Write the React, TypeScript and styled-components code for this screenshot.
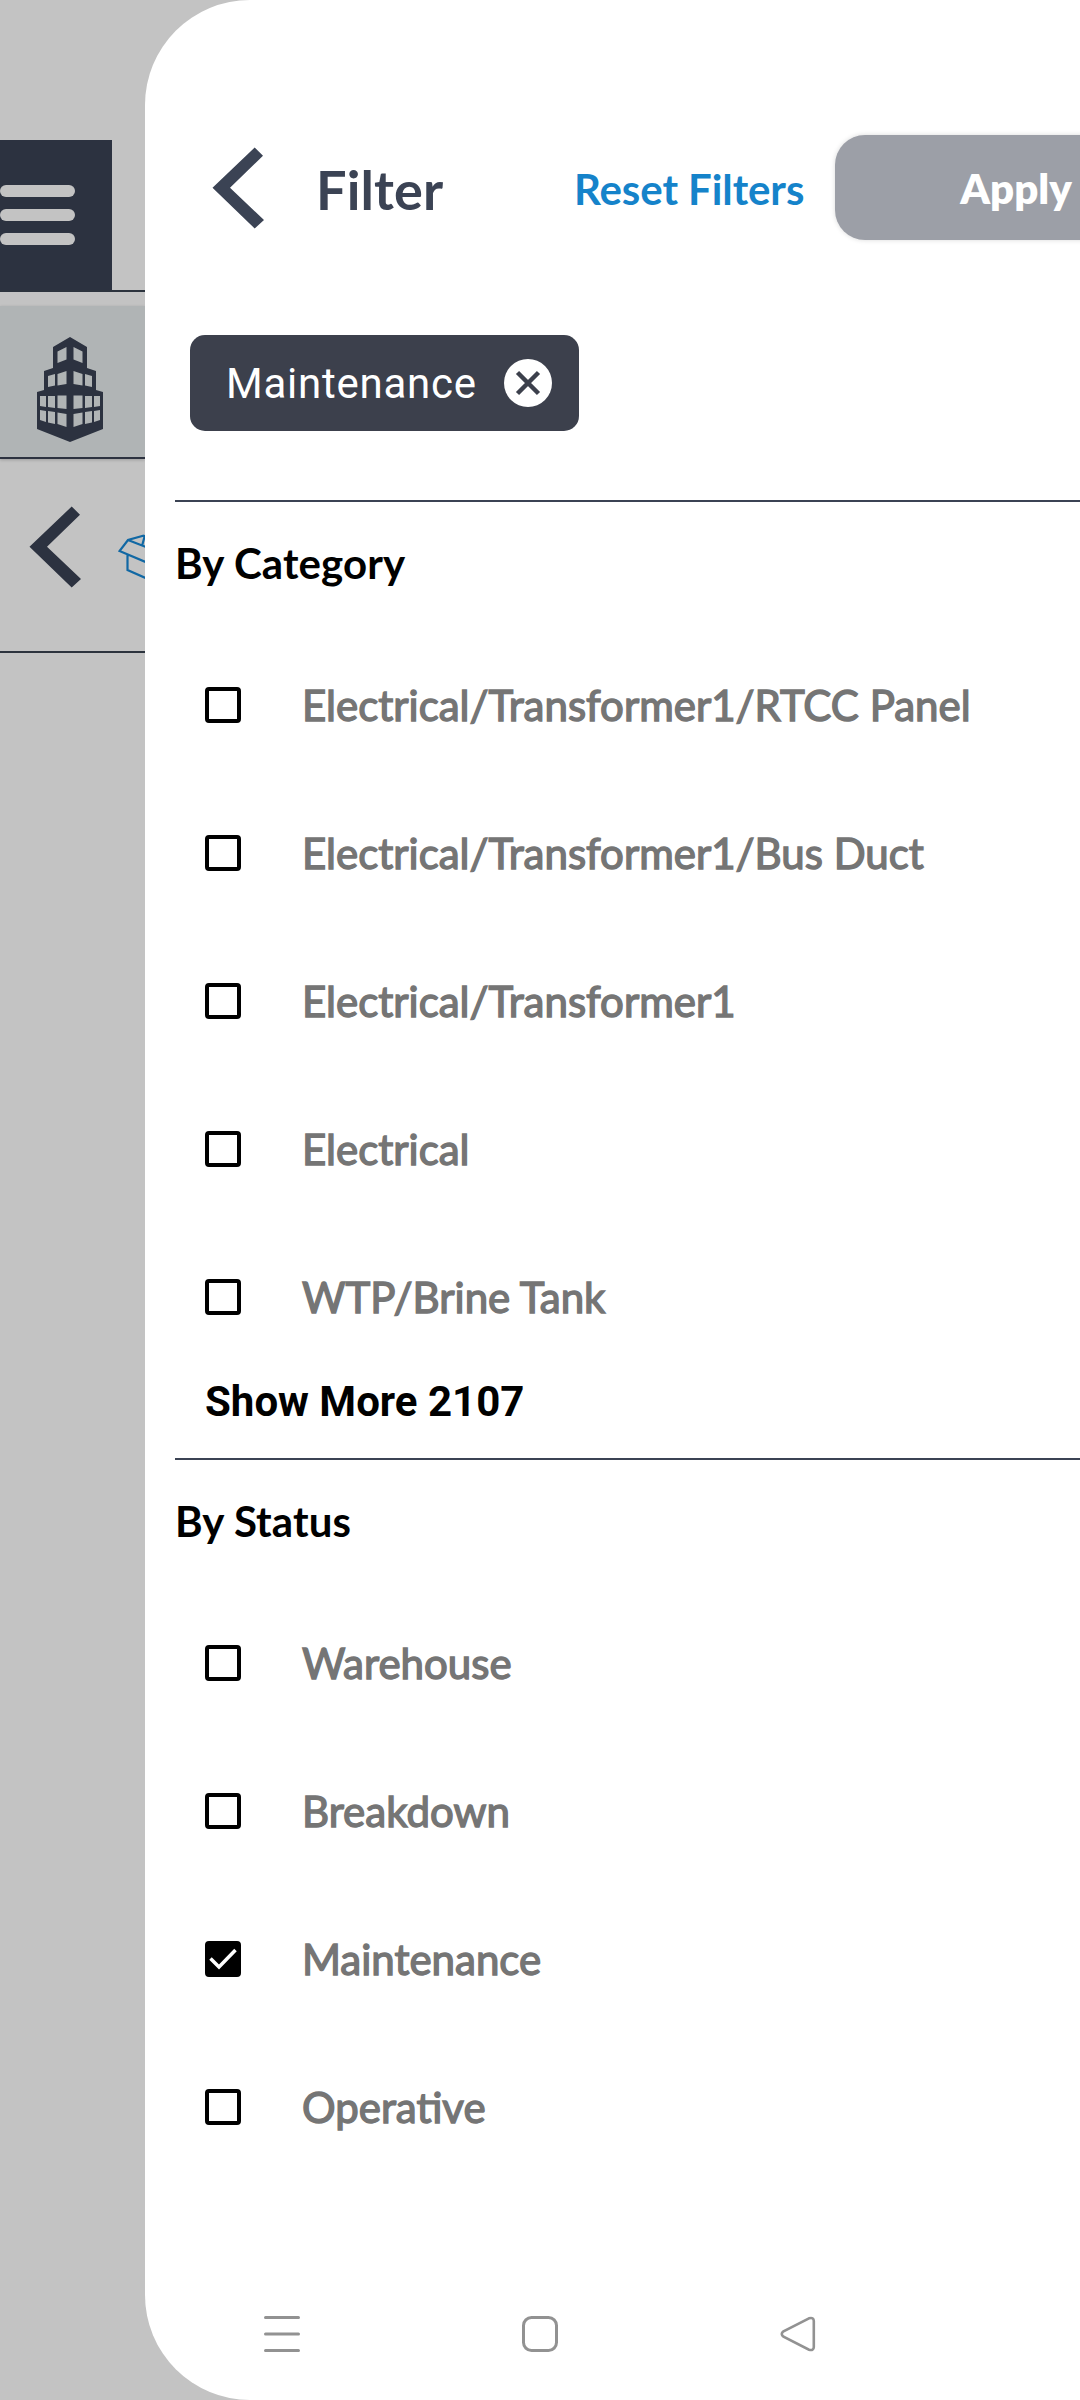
import React, { useState } from 'react';
import styled, { createGlobalStyle, css } from 'styled-components';

const navy = '#3b4354';
const dimNavy = '#2c3240';

const GlobalStyle = createGlobalStyle`
  *, *::before, *::after { box-sizing: border-box; }
  body { margin: 0; background: #c3c3c3; overflow: hidden; }
  button { border: 0; padding: 0; background: none; text-align: left; }
`;

const Screen = styled.div`
  display: flex;
  width: 1080px;
  height: 2400px;
  overflow: hidden;
  background: #c3c3c3;
  font-family: Lato, 'Open Sans', sans-serif;
`;

/* ---- dimmed page behind the drawer ---- */

const Backdrop = styled.aside`
  display: flex;
  flex-direction: column;
  flex: 0 0 145px;
  padding-top: 140px;
  overflow: hidden;
`;

const AppBar = styled.div`
  height: 152px;
  border-bottom: 2px solid #2c333d;
`;

const MenuTile = styled.div`
  display: flex;
  flex-direction: column;
  width: 112px;
  height: 150px;
  padding-top: 45px;
  gap: 12px;
  background: ${dimNavy};
`;

const MenuLine = styled.span`
  width: 75px;
  height: 12px;
  border-radius: 6px;
  background: #c3c3c3;
`;

const SiteBar = styled.div`
  height: 153px;
  margin-top: 14px;
  padding: 31px 0 0 37px;
  background: #b0b4b5;
  border-bottom: 2px solid ${dimNavy};
  box-shadow: 0 1px 3px rgba(0, 0, 0, 0.2);
`;

const TitleBar = styled.div`
  display: flex;
  align-items: flex-start;
  height: 194px;
  padding: 47px 0 0 29px;
  border-bottom: 2px solid #2c333d;
`;

const BoxSlot = styled.span`
  flex: none;
  margin: 28px 0 0 36px;
`;

/* ---- drawer ---- */

const Drawer = styled.main`
  display: flex;
  flex-direction: column;
  flex: 0 0 935px;
  height: 2400px;
  overflow: hidden;
  background: #fff;
  border-radius: 105px 0 0 105px;
`;

const Header = styled.header`
  display: flex;
  align-items: center;
  height: 105px;
  margin: 135px 0 0 67px;
`;

const Title = styled.h1`
  flex: none;
  width: 258px;
  margin: 4px 0 0 51px;
  color: ${navy};
  font-size: 54px;
  font-weight: 700;
  line-height: 64px;
  letter-spacing: 0.15px;
  white-space: nowrap;
`;

const ResetButton = styled.button`
  flex: none;
  width: 261px;
  margin-top: 3px;
  color: #1583ca;
  font: 700 42px/52px Lato, sans-serif;
  letter-spacing: -0.08px;
  white-space: nowrap;
`;

const ApplyButton = styled.button`
  flex: none;
  width: 362px;
  height: 105px;
  padding-top: 2px;
  border-radius: 30px;
  background: #9c9fa7;
  box-shadow: 0 0 5px rgba(0, 0, 0, 0.15);
  color: #fff;
  font: 800 42px/103px Lato, sans-serif;
  text-align: center;
`;

const Chips = styled.div`
  display: flex;
  height: 260px;
  padding: 95px 0 0 45px;
`;

const Chip = styled.div`
  display: flex;
  align-items: center;
  justify-content: space-between;
  width: 389px;
  height: 96px;
  padding: 0 27px 0 36px;
  border-radius: 15px;
  background: #3c404c;
  color: #fff;
  font-family: Roboto, sans-serif;
  font-size: 42px;
  letter-spacing: 0.75px;
`;

const Section = styled.section`
  display: flex;
  flex-direction: column;
  margin-left: 30px;
  border-top: 2px solid ${navy};
`;

const SectionTitle = styled.h2`
  height: 129px;
  margin: 0;
  padding-top: 35px;
  color: #000;
  font-size: 42px;
  font-weight: 700;
  line-height: 52px;
  letter-spacing: 0.12px;
  font-variant-ligatures: common-ligatures;
`;

const Option = styled.label`
  display: flex;
  align-items: center;
  gap: 60px;
  height: 148px;
  padding-left: 30px;
`;

const Tick = styled.span<{ $on: boolean }>`
  display: flex;
  flex: none;
  width: 36px;
  height: 36px;
  border: 4px solid #000;
  border-radius: 4px;
  ${(p) => p.$on && css`background: #000;`}
`;

const OptionText = styled.span`
  margin: 1px 0 0 1px;
  color: #757575;
  font-size: 42px;
  line-height: 51px;
  white-space: nowrap;
  -webkit-text-stroke: 1.4px #757575;
`;

const ShowMore = styled.button`
  display: flex;
  height: 87px;
  padding: 6px 0 0 30px;
  color: #000;
  font: 700 42px/50px Roboto, sans-serif;
`;

const NavBar = styled.nav`
  display: flex;
  gap: 222px;
  margin: auto 0 48px 119px;
`;

const ChevronSvg = styled.svg`
  flex: none;
`;

const Chevron = ({ color }: { color: string }) => (
  <ChevronSvg width="53" height="82" viewBox="0 0 53 82">
    <path d="M0.5 40.8 42.7 0.5 51 8.7 18 40.8 52 73 42.7 81.5Z" fill={color} />
  </ChevronSvg>
);

const Building = () => (
  <svg width="66" height="105" viewBox="0 0 66 105">
    <path
      fill={dimNavy}
      d="M33 0 50 10V31L59 34V53L66 55V92L33 105 0 92V55L7 53V34L16 31V10Z"
    />
    <path
      fill="#b0b4b5"
      d="M20.500 14.500 29.500 10V22.500L20.500 26ZM45.500 14.500 36.500 10V22.500L45.500 26Z
      M11 39 18 37V48.500L11 50ZM20.500 37 29.500 34V47L20.500 48.500ZM55 39 48 37V48.500L55 50ZM45.500 37 36.500 34V47L45.500 48.500Z
      M3 59H9V70L3 69ZM11 59H18V71L11 70ZM20.500 58.500H29.500V72L20.500 71ZM63 59H57V70L63 69ZM55 59H48V71L55 70ZM45.500 58.500H36.500V72L45.500 71Z
      M3 73 9 74V85L3 83ZM11 74 18 75V87L11 85.500ZM20.500 75.500 29.500 77V90L20.500 87ZM63 73 57 74V85L63 83ZM55 74 48 75V87L55 85.500ZM45.500 75.500 36.500 77V90L45.500 87Z"
    />
  </svg>
);

const OpenBox = () => (
  <svg width="54" height="50" viewBox="0 0 54 50" fill="none" stroke="#1168a4" strokeWidth="2.200">
    <path d="M26 1.500 10 6 1.500 17 30 29 38 17 10 6M24 12 27 1M9.500 20V36L30 45V29" />
  </svg>
);

const RemoveIcon = () => (
  <svg width="48" height="48" viewBox="0 0 48 48">
    <circle cx="24" cy="24" r="24" fill="#fff" />
    <path d="M13.500 13.500 34.500 34.500M34.500 13.500 13.500 34.500" stroke="#3c404c" strokeWidth="4.500" />
  </svg>
);

const CheckMark = () => (
  <svg width="28" height="28" viewBox="0 0 28 28" fill="none">
    <path d="M1.500 13.500 10 22 26.500 5" stroke="#fff" strokeWidth="3.500" />
  </svg>
);

const categories = [
  'Electrical/Transformer1/RTCC Panel',
  'Electrical/Transformer1/Bus Duct',
  'Electrical/Transformer1',
  'Electrical',
  'WTP/Brine Tank',
];
const statuses = ['Warehouse', 'Breakdown', 'Maintenance', 'Operative'];

export default function App() {
  const [selected, setSelected] = useState<string[]>(['Maintenance']);
  const toggle = (name: string) =>
    setSelected((s) => (s.includes(name) ? s.filter((n) => n !== name) : [...s, name]));

  const renderOption = (name: string) => (
    <Option key={name} onClick={() => toggle(name)}>
      <Tick $on={selected.includes(name)}>{selected.includes(name) && <CheckMark />}</Tick>
      <OptionText>{name}</OptionText>
    </Option>
  );

  return (
    <>
      <GlobalStyle />
      <Screen>
        <Backdrop>
          <AppBar>
            <MenuTile>
              <MenuLine />
              <MenuLine />
              <MenuLine />
            </MenuTile>
          </AppBar>
          <SiteBar>
            <Building />
          </SiteBar>
          <TitleBar>
            <Chevron color={dimNavy} />
            <BoxSlot>
              <OpenBox />
            </BoxSlot>
          </TitleBar>
        </Backdrop>
        <Drawer>
          <Header>
            <Chevron color={navy} />
            <Title>Filter</Title>
            <ResetButton>Reset Filters</ResetButton>
            <ApplyButton>Apply</ApplyButton>
          </Header>
          <Chips>
            {selected.map((name) => (
              <Chip key={name} onClick={() => toggle(name)}>
                {name}
                <RemoveIcon />
              </Chip>
            ))}
          </Chips>
          <Section>
            <SectionTitle>By Category</SectionTitle>
            {categories.map(renderOption)}
            <ShowMore>Show More 2107</ShowMore>
          </Section>
          <Section>
            <SectionTitle>By Status</SectionTitle>
            {statuses.map(renderOption)}
          </Section>
          <NavBar>
            <svg width="36" height="36" viewBox="0 0 36 36" stroke="#929292" strokeWidth="3" strokeLinecap="round">
              <path d="M1.500 1.500H34.500M1.500 18H34.500M1.500 34.500H34.500" />
            </svg>
            <svg width="36" height="36" viewBox="0 0 36 36" fill="none" stroke="#929292" strokeWidth="3">
              <rect x="1.500" y="1.500" width="33" height="33" rx="8" />
            </svg>
            <svg width="36" height="36" viewBox="0 0 36 36" fill="none" stroke="#929292" strokeWidth="2.600">
              <path d="M29 2.300 3.500 15.300Q0 18 3.500 20.700L29 33.700Q33.800 35 33.800 31V5Q33.800 1 29 2.300Z" />
            </svg>
          </NavBar>
        </Drawer>
      </Screen>
    </>
  );
}
